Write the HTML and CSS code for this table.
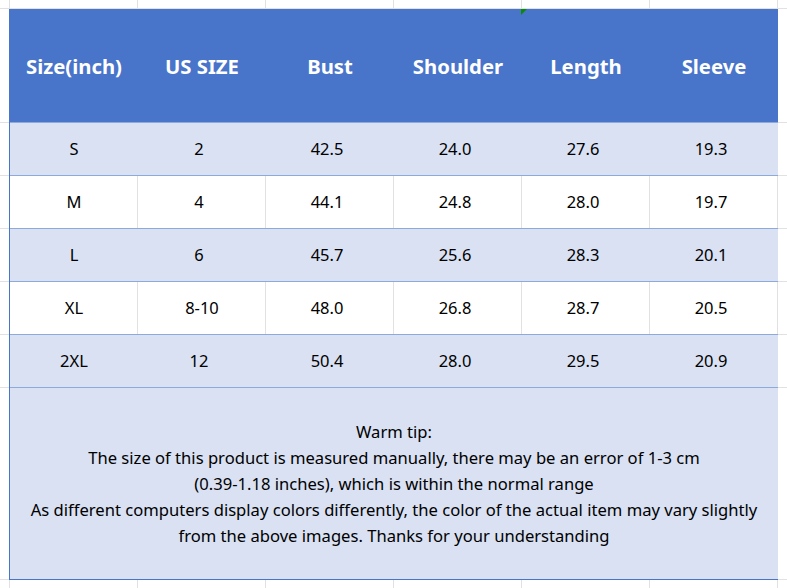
FILE: index.html
```html
<!DOCTYPE html>
<html lang="en">
<head>
<meta charset="utf-8">
<title>Size chart</title>
<link rel="stylesheet" href="styles.css">
</head>
<body>
<div class="sheet">
  <div class="chart">
    <div class="row head">
      <div class="cell">Size(inch)</div>
      <div class="cell">US SIZE</div>
      <div class="cell">Bust</div>
      <div class="cell">Shoulder</div>
      <div class="cell">Length</div>
      <div class="cell">Sleeve</div>
    </div>
    <div class="row band">
      <div class="cell">S</div><div class="cell num">2</div><div class="cell num">42.5</div><div class="cell num">24.0</div><div class="cell num">27.6</div><div class="cell num">19.3</div>
    </div>
    <div class="row plain">
      <div class="cell">M</div><div class="cell num">4</div><div class="cell num">44.1</div><div class="cell num">24.8</div><div class="cell num">28.0</div><div class="cell num">19.7</div>
    </div>
    <div class="row band">
      <div class="cell">L</div><div class="cell num">6</div><div class="cell num">45.7</div><div class="cell num">25.6</div><div class="cell num">28.3</div><div class="cell num">20.1</div>
    </div>
    <div class="row plain">
      <div class="cell">XL</div><div class="cell">8-10</div><div class="cell num">48.0</div><div class="cell num">26.8</div><div class="cell num">28.7</div><div class="cell num">20.5</div>
    </div>
    <div class="row band">
      <div class="cell">2XL</div><div class="cell num">12</div><div class="cell num">50.4</div><div class="cell num">28.0</div><div class="cell num">29.5</div><div class="cell num">20.9</div>
    </div>
    <div class="tip">
      <p>Warm tip:<br>The size of this product is measured manually, there may be an error of 1-3 cm<br>(0.39-1.18 inches), which is within the normal range<br>As different computers display colors differently, the color of the actual item may vary slightly<br>from the above images. Thanks for your understanding</p>
    </div>
    <span class="marker"></span>
  </div>
</div>
</body>
</html>
```
FILE: styles.css
```css
html, body {
  margin: 0;
  padding: 0;
}

body {
  width: 787px;
  height: 588px;
  overflow: hidden;
  font-family: "Noto Sans", "Noto Sans CJK KR", sans-serif;
  color: #000;
  background-color: #fff;
  background-image:
    repeating-linear-gradient(to right, transparent 0 9px, #e1e1e1 9px 10px, transparent 10px 128px),
    linear-gradient(to bottom,
      transparent 0 8px, #e1e1e1 8px 9px,
      transparent 9px 122px, #e1e1e1 122px 123px,
      transparent 123px 175px, #e1e1e1 175px 176px,
      transparent 176px 228px, #e1e1e1 228px 229px,
      transparent 229px 281px, #e1e1e1 281px 282px,
      transparent 282px 334px, #e1e1e1 334px 335px,
      transparent 335px 387px, #e1e1e1 387px 388px,
      transparent 388px 579px, #e1e1e1 579px 580px,
      transparent 580px);
}

.sheet {
  padding: 9px 0 0 9px;
}

.chart {
  position: relative;
  width: 768px;
  border-left: 1px solid #4874ca;
}

.row {
  display: grid;
  grid-template-columns: repeat(6, 128px);
  align-items: center;
  text-align: center;
}

.head {
  height: 113px;
  background: #4874ca;
  color: #fff;
  font-weight: 700;
  font-size: 20.3px;
}

.band,
.plain {
  height: 50px;
  padding-bottom: 2px;
  border-top: 1px solid #8ea9db;
  font-size: 16.5px;
}

.num {
  padding-right: 6px;
}

.band {
  background: #d9e1f3;
}

.tip {
  height: 191px;
  border-top: 1px solid #8ea9db;
  border-bottom: 1px solid #4874ca;
  background: #d9e1f3;
  display: flex;
  align-items: center;
  justify-content: center;
  text-align: center;
  font-size: 16.6px;
  line-height: 26px;
}

.tip p {
  margin: 0;
}

.marker {
  position: absolute;
  left: 511px;
  top: 0;
  width: 0;
  height: 0;
  border-top: 6px solid #0a8a0a;
  border-right: 6px solid transparent;
}
```
